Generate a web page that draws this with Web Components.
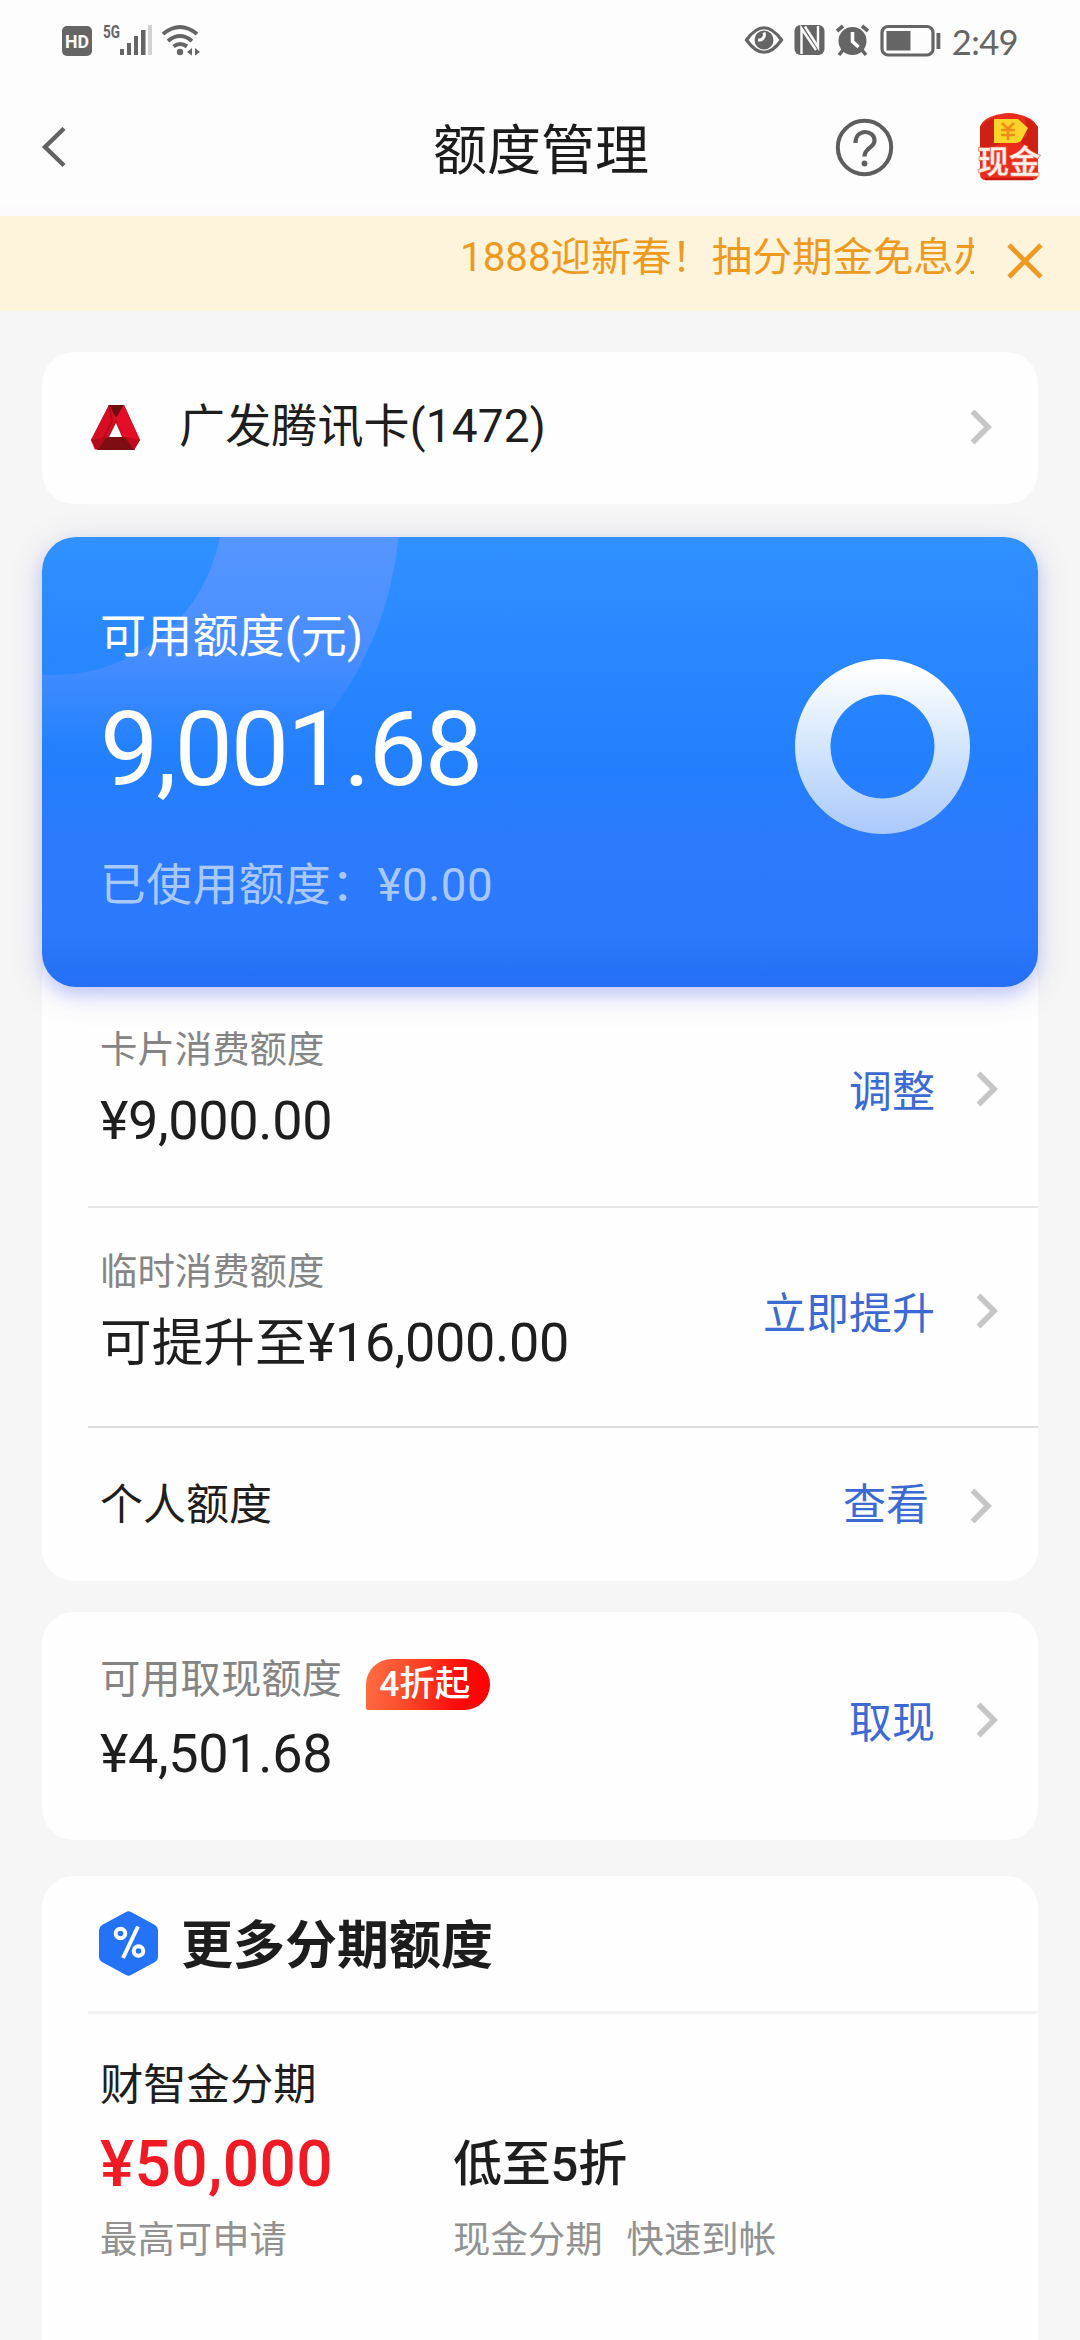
<!DOCTYPE html>
<html lang="zh-CN">
<head>
<meta charset="utf-8">
<title>额度管理</title>
<style>
html,body{margin:0;padding:0}
body{width:1080px;height:2340px;overflow:hidden;background:#f6f6f6;color:#1e1e1e;font-family:Roboto,"Noto Sans CJK SC",sans-serif;display:flex;flex-direction:column}
main{flex:1;min-height:0;padding:41px 42px 0;display:flex;flex-direction:column}
</style>
</head>
<body>
<status-bar></status-bar>
<nav-bar>额度管理</nav-bar>
<notice-bar>1888迎新春！抽分期金免息办</notice-bar>
<main>
  <bank-card>广发腾讯卡(1472)</bank-card>
  <quota-hero>
    <span slot="label">可用额度(元)</span>
    <span slot="amount">9,001.68</span>
    <span slot="used">已使用额度：¥0.00</span>
  </quota-hero>
  <white-card class="list" style="margin-top:-40px;padding-top:40px">
    <quota-row divider style="--h:219px">
      <span slot="label">卡片消费额度</span>
      <span slot="value">¥9,000.00</span>
      <span slot="action">调整</span>
    </quota-row>
    <quota-row divider style="--h:218px;--top:39px;--line:#dcdcdc;--lift:3px">
      <span slot="label">临时消费额度</span>
      <span slot="value"><span style="font-size:51.700px;letter-spacing:0">可提升至</span>¥16,000.00</span>
      <span slot="action">立即提升</span>
    </quota-row>
    <simple-row>个人额度<span slot="action">查看</span></simple-row>
  </white-card>
  <white-card style="margin-top:31px">
    <quota-row style="--h:228px;--top:43px;--label:40.300px;--gap:17px;--lift:3px">
      <span slot="label">可用取现额度</span>
      <promo-tag slot="tag">4折起</promo-tag>
      <span slot="value">¥4,501.68</span>
      <span slot="action">取现</span>
    </quota-row>
  </white-card>
  <white-card style="margin-top:36px;flex:1;--bottom:0">
    <section-head>更多分期额度</section-head>
    <loan-offer>
      <span slot="name">财智金分期</span>
      <span slot="amount">¥50,000</span>
      <span slot="hint">最高可申请</span>
      <span slot="rate">低至5折</span>
      <span slot="desc">现金分期</span>
      <span slot="desc">快速到帐</span>
    </loan-offer>
  </white-card>
</main>
<script>
const define = (name, html) => {
  const t = document.createElement('template');
  t.innerHTML = html;
  customElements.define(name, class extends HTMLElement {
    constructor() {
      super();
      this.attachShadow({mode: 'open'}).appendChild(t.content.cloneNode(true));
    }
  });
};

define('chevron-icon', `<style>:host{display:block;width:22px;height:36px;flex:none}svg{display:block}</style>
<svg width="22" height="36" viewBox="0 0 22 36"><path d="M2.500 2.500 18 18 2.500 33.500" fill="none" stroke="#c6c6c6" stroke-width="5.600"/></svg>`);

define('status-bar', `<style>
:host{display:flex;height:82px;background:#fdfdfd;padding:0 62px 0 62px;box-sizing:border-box;align-items:center;justify-content:space-between;flex:none}
div{display:flex;align-items:center}
svg{display:block;overflow:visible}
b{font:400 34.500px/40px Lato,"Noto Sans CJK SC",sans-serif;color:#656565;letter-spacing:-.6px;margin:2px 0 0 11px}
</style>
<div>
<svg width="140" height="32" viewBox="62 25 140 32" fill="#656565">
  <rect x="62" y="26" width="30" height="30" rx="5"/>
  <text x="77" y="48" font-family="Roboto,sans-serif" font-weight="700" font-size="19" text-anchor="middle" textLength="24" lengthAdjust="spacingAndGlyphs" fill="#fff">HD</text>
  <text x="103" y="38" font-family="Roboto,sans-serif" font-weight="700" font-size="18" textLength="17" lengthAdjust="spacingAndGlyphs">5G</text>
  <rect x="120" y="49" width="4" height="6"/><rect x="127" y="43" width="4" height="12"/><rect x="134" y="36" width="4" height="19"/><rect x="141" y="30" width="4.500" height="25"/><rect x="148" y="25" width="4" height="30" fill="#d2d2d2"/>
  <g fill="none" stroke="#656565" stroke-width="4"><path d="M163 34Q180 20 197 34"/><path d="M168 41Q180 31 192 41"/><path d="M173.500 46.500Q180 41.500 187 46.500"/></g>
  <circle cx="180" cy="52" r="3.200"/><path d="M187 52l5-4v7.500zM200 52l-5-4v7.500z"/>
</svg>
</div>
<div>
<svg width="196" height="34" viewBox="745 24 196 34" fill="#656565">
  <path d="M746.500 40Q764 15.500 781.500 40Q764 64.500 746.500 40Z" fill="none" stroke="#656565" stroke-width="3.200"/>
  <circle cx="764" cy="40" r="9.500"/><path d="M758 40a5.500 5.500 0 0 0 6-7.500" fill="none" stroke="#fdfdfd" stroke-width="3"/>
  <rect x="794.500" y="25" width="30" height="30" rx="6"/>
  <path d="M801.500 54V28.500L816 50M805 26.500 818 47V26" fill="none" stroke="#fdfdfd" stroke-width="2.400"/>
  <circle cx="852.500" cy="41" r="14"/>
  <path d="M837 31l6-5M868 31l-6-5M843 50l-4 5M862 50l4 5" stroke="#656565" stroke-width="3.600"/>
  <path d="M852.500 32v9.500l6 5.500" fill="none" stroke="#fdfdfd" stroke-width="3.600"/>
  <rect x="882" y="26.500" width="51" height="28.500" rx="6" fill="none" stroke="#656565" stroke-width="3.200"/>
  <rect x="886.500" y="31" width="24" height="19.500"/><rect x="936.500" y="33" width="3.800" height="16"/>
</svg><b>2:49</b>
</div>`);

define('nav-bar', `<style>
:host{display:grid;grid-template-columns:1fr auto 1fr;align-items:center;height:134px;flex:none;padding:0 39px 0 41px;background:linear-gradient(#fdfdfd 0 124px,#fdf8fd 127px)}
h1{margin:5px 0 0;font-size:54px;line-height:80px;font-weight:400;color:#1c1c1c}
svg{display:block}
.r{display:flex;align-items:center;justify-content:flex-end;gap:83px}
</style>
<svg width="26" height="44" viewBox="0 0 26 44"><path d="M23 1.500 4 20 23 38.500" fill="none" stroke="#626262" stroke-width="4.400"/></svg>
<h1><slot></slot></h1>
<div class="r">
<svg width="59" height="59" viewBox="0 0 59 59" style="margin-bottom:4px"><circle cx="29.500" cy="29.500" r="26.700" fill="none" stroke="#5e5e5e" stroke-width="4"/><path d="M20.500 25C20.500 10 39.500 11.500 39.500 22.500C39.500 30 29.500 29.500 29.500 38.500" fill="none" stroke="#5e5e5e" stroke-width="4.200"/><circle cx="29.500" cy="45.500" r="2.900" fill="#5e5e5e"/></svg>
<svg width="64" height="70" viewBox="0 0 64 70" style="margin-bottom:3px">
  <path d="M3 14Q6 4 24 1Q32 -1 40 1Q56 4 61 14V61Q61 67 55 67H9Q3 67 3 61Z" fill="#ea2c1d"/>
  <path d="M3 14Q8 8 17 5V26L24 30L3 42Z" fill="#cf2016"/><path d="M61 14Q56 8 48 5L50 22L43 29L61 42Z" fill="#cf2016"/>
  <path d="M17 6H41L51 15L44 28Q42 30 38 30H17Z" fill="#fdd52a"/>
  <path d="M25 10L31 16L37 10M31 16V27M24 17H38M24 22H38" fill="none" stroke="#f38a18" stroke-width="2.600"/>
  <path d="M8 66H56" stroke="#c9180f" stroke-width="2.500"/>
  <text x="32" y="60" text-anchor="middle" font-family="Noto Sans CJK SC,sans-serif" font-weight="500" font-size="31.500" fill="#fff0ea" stroke="#f0705a" stroke-width="1.500" paint-order="stroke">现金</text>
</svg>
</div>`);

define('notice-bar', `<style>
:host{display:flex;height:95px;flex:none;background:#fef4dc;padding:0 37px 0 460px;box-sizing:border-box;align-items:flex-start}
p{margin:12px 0 0;width:515px;overflow:hidden;white-space:nowrap;font-size:40.300px;line-height:60px;color:#ee9a1e}
svg{display:block;margin:27px 0 0 33px}
</style><p><slot></slot></p>
<svg width="36" height="36" viewBox="0 0 36 36"><path d="M2 2 34 34M34 2 2 34" stroke="#ef9a23" stroke-width="4.800"/></svg>`);

define('white-card', `<style>:host{display:block;background:#fefefe;border-radius:32px 32px var(--bottom,32px) var(--bottom,32px)}</style><slot></slot>`);

define('bank-card', `<style>
:host{display:flex;align-items:center;height:152px;flex:none;background:#fefefe;border-radius:32px;padding:0 46px 0 49px;box-sizing:border-box}
span{flex:1;margin-left:38px;padding-bottom:5px;font-size:46px;line-height:64px;letter-spacing:.15px}
svg{display:block}chevron-icon{margin-bottom:3px}
</style>
<svg width="50" height="46" viewBox="0 0 50 46">
  <path d="M18 0H33L49 35L43 45H6L0 35Z" fill="#c90d20"/>
  <path d="M18 0H33L25 13Z" fill="#6e0d12"/><path d="M18 0L25 13L16 32L4 45L0 35Z" fill="#d80d23"/><path d="M33 0L49 35L32 32L25 13Z" fill="#e50c28"/>
  <path d="M16 32H34L44 45H6Z" fill="#7d0d12"/><path d="M0 35L16 32L6 45Z" fill="#b20b1b"/><path d="M49 35L34 32L43 45Z" fill="#c00a1e"/>
  <path d="M18 0L21 16L12 34" fill="none" stroke="#a80b1a" stroke-width="1.500"/>
  <path d="M25 18L31 32H18Z" fill="#fff"/>
</svg><span><slot></slot></span><chevron-icon></chevron-icon>`);

define('quota-hero', `<style>
:host{display:block;position:relative;z-index:1;margin-top:33px;flex:none;height:450px;border-radius:34px;background:linear-gradient(#3091ff,#2a88ff 22%,#2280ff 50%,#2c7afe 66%,#2b79fd 88%,#246ff5);box-shadow:0 6px 34px rgba(70,80,170,.17),0 8px 16px rgba(70,90,255,.22);color:#fff}
.in{position:relative;height:450px;display:flex;justify-content:space-between}
.bg{position:absolute;left:0;top:0;border-radius:34px 0 0 0}
.t{position:relative;display:flex;flex-direction:column;padding:69px 0 0 58px}
.l{font-size:46px;line-height:60px;letter-spacing:.2px}
.a{font-size:104px;line-height:120px;letter-spacing:-2.200px;margin-top:24px}
.u{font-size:45.700px;line-height:60px;letter-spacing:.55px;margin-top:46px;color:rgba(255,255,255,.6)}
svg{display:block}.ring{margin:122px 68px 0 0}
</style><div class="in">
<svg class="bg" width="400" height="300" viewBox="42 537 400 300"><defs><linearGradient id="f" x1="0" y1="537" x2="0" y2="745" gradientUnits="userSpaceOnUse"><stop stop-color="#9f9fff" stop-opacity=".34"/><stop offset=".55" stop-color="#9f9fff" stop-opacity=".26"/><stop offset="1" stop-color="#9f9fff" stop-opacity="0"/></linearGradient></defs>
<path fill="url(#f)" fill-rule="evenodd" d="M-290 505a345 345 0 1 0 690 0a345 345 0 1 0-690 0ZM-115 505a169 170 0 1 0 338 0a169 170 0 1 0-338 0Z"/></svg>
<div class="t"><div class="l"><slot name="label"></slot></div><div class="a"><slot name="amount"></slot></div><div class="u"><slot name="used"></slot></div></div>
<svg class="ring" width="175" height="175" viewBox="0 0 175 175"><defs><linearGradient id="g" x1="0" y1="0" x2="0" y2="1"><stop offset=".05" stop-color="#fff"/><stop offset=".5" stop-color="#d3e6fd"/><stop offset="1" stop-color="#aac9fb"/></linearGradient></defs><path fill="url(#g)" fill-rule="evenodd" d="M87.500 0a87.500 87.500 0 1 0 .01 0ZM87.500 35.500a52 52 0 1 1-.01 0Z"/></svg>
</div>`);

define('quota-row', `<style>
:host{display:flex;height:var(--h);margin-left:46px;padding:0 40px 0 12px;justify-content:space-between}
:host([divider]){border-bottom:2px solid var(--line,#e6e6e6)}
.i{padding-top:var(--top,38px)}
.l{display:flex;align-items:center;gap:24px;height:50px;line-height:50px;font-size:var(--label,37.400px);color:#858585}
.v{margin-top:var(--gap,14px);font-size:54px;line-height:64px;letter-spacing:-.35px;white-space:nowrap}
.a{display:flex;align-items:center;gap:41px;font-size:43px;line-height:60px;color:#3c6ad3;padding-bottom:calc(9px - var(--lift,0px))}
chevron-icon{margin-bottom:7px}
</style>
<div class="i"><div class="l"><slot name="label"></slot><slot name="tag"></slot></div><div class="v"><slot name="value"></slot></div></div>
<div class="a"><slot name="action"></slot><chevron-icon></chevron-icon></div>`);

define('simple-row', `<style>
:host{display:flex;height:153px;margin-left:46px;padding:0 46px 0 12px;justify-content:space-between;align-items:center;font-size:43px;line-height:60px}
.a{display:flex;align-items:center;gap:41px;color:#3c6ad3}chevron-icon{margin-top:2px}
</style><div><slot></slot></div><div class="a"><slot name="action"></slot><chevron-icon></chevron-icon></div>`);

define('promo-tag', `<style>
:host{display:block;width:124px;height:51px;margin-top:8px;border-radius:26px 26px 26px 2px;background:linear-gradient(100deg,#ff7043,#fb4a2a 35%,#fc0a0a 75%,#f00);color:#fff;font-size:35.500px;line-height:50px;font-weight:500;text-align:center;box-sizing:border-box;padding-right:6px;white-space:nowrap}
</style><slot></slot>`);

define('section-head', `<style>
:host{display:flex;align-items:center;height:135px;margin-left:46px;padding-left:11px;border-bottom:3px solid #f3f3f3;box-sizing:content-box}
h2{margin:7px 0 0 23px;font-size:52px;line-height:70px;font-weight:700;color:#1d1d1d}
svg{display:block}
</style>
<svg width="59" height="65" viewBox="0 0 59 65"><path d="M27 1Q29.500 -.5 32 1L56 14Q59 16 59 19V46Q59 49 56 51L32 64Q29.500 65.500 27 64L3 51Q0 49 0 46V19Q0 16 3 14Z" fill="#2472f6"/><g fill="none" stroke="#fff" stroke-width="4"><circle cx="21.500" cy="22.500" r="4.800"/><circle cx="39.500" cy="40" r="4.800"/><path d="M39 15.500 24 47" stroke-width="4"/></g></svg>
<h2><slot></slot></h2>`);

define('loan-offer', `<style>
:host{display:grid;grid-template-columns:353px 1fr;padding:42px 0 0 58px}
.n{grid-column:1/3;font-size:43.300px;line-height:60px}
.m,.r{margin-top:19px;line-height:60px}
.m{font-size:64px;font-weight:500;color:#f01a25;letter-spacing:.4px}
.r{font-size:49px;font-weight:500;letter-spacing:-.2px}
.h,.d{margin-top:20px;line-height:50px;font-size:37.400px;color:#929292}.d{display:flex;gap:24px}
</style>
<div class="n"><slot name="name"></slot></div><div class="m"><slot name="amount"></slot></div><div class="r"><slot name="rate"></slot></div><div class="h"><slot name="hint"></slot></div><div class="d"><slot name="desc"></slot></div>`);
</script>
</body>
</html>
